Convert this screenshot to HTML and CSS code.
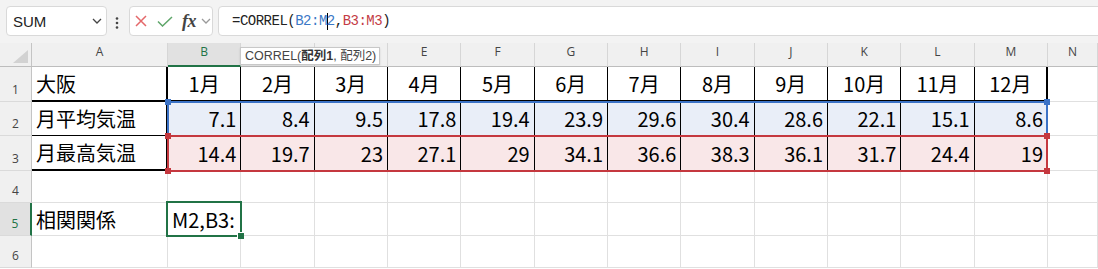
FILE: index.html
```html
<!DOCTYPE html>
<html>
	<head>
		<meta charset="UTF-8">
		<title>CORREL</title>
		<link rel="stylesheet" href="styles.css">
	</head>
	<body>
		<div class="bar">
			<div class="namebox">
				<span class="name">SUM</span>
				<svg class="chev" width="10" height="6" viewBox="0 0 10 6"><polyline points="1,1 5,5 9,1"/></svg>
			</div>
			<svg class="dots" width="4" height="12" viewBox="0 0 4 12"><circle cx="2" cy="1.5" r="1.3"/><circle cx="2" cy="6" r="1.3"/><circle cx="2" cy="10.5" r="1.3"/></svg>
			<div class="fxbox">
				<svg class="cancel" width="12" height="12" viewBox="0 0 12 12"><path d="M1 1L11 11M11 1L1 11"/></svg>
				<svg class="enter" width="16" height="11" viewBox="0 0 16 11"><polyline points="1,5.5 5.5,10 15,1"/></svg>
				<span class="fx">fx</span>
				<svg class="chev small" width="10" height="6" viewBox="0 0 10 6"><polyline points="1,1 5,5 9,1"/></svg>
			</div>
			<div class="formula">=CORREL(<span class="rb">B2:M</span><span class="caret"></span><span class="rb">2</span>,<span class="rr">B3:M3</span>)</div>
		</div>

		<div class="sheet">
			<!-- 列見出し（C,Dはヒントに隠れている） -->
			<div class="corner"><span class="tri"></span></div>
			<div class="ch">A</div><div class="ch sel">B</div><div class="ch"></div><div class="ch"></div><div class="ch">E</div><div class="ch">F</div><div class="ch">G</div><div class="ch">H</div><div class="ch">I</div><div class="ch">J</div><div class="ch">K</div><div class="ch">L</div><div class="ch">M</div><div class="ch">N</div>

			<!-- 1行目 -->
			<div class="rh">1</div>
			<div class="c t hb hr">大阪</div>
			<div class="c t hb mid">1月</div><div class="c t hb mid">2月</div><div class="c t hb mid">3月</div><div class="c t hb mid">4月</div><div class="c t hb mid">5月</div><div class="c t hb mid">6月</div><div class="c t hb mid">7月</div><div class="c t hb mid">8月</div><div class="c t hb mid">9月</div><div class="c t hb mid">10月</div><div class="c t hb mid">11月</div><div class="c t hb hr mid">12月</div>
			<div class="c"></div>

			<!-- 2行目 -->
			<div class="rh">2</div>
			<div class="c t hr">月平均気温</div>
			<div class="c t num bl">7.1</div><div class="c t num bl">8.4</div><div class="c t num bl">9.5</div><div class="c t num bl">17.8</div><div class="c t num bl">19.4</div><div class="c t num bl">23.9</div><div class="c t num bl">29.6</div><div class="c t num bl">30.4</div><div class="c t num bl">28.6</div><div class="c t num bl">22.1</div><div class="c t num bl">15.1</div><div class="c t num bl">8.6</div>
			<div class="c"></div>

			<!-- 3行目 -->
			<div class="rh">3</div>
			<div class="c t hb hr">月最高気温</div>
			<div class="c t num rd">14.4</div><div class="c t num rd">19.7</div><div class="c t num rd">23</div><div class="c t num rd">27.1</div><div class="c t num rd">29</div><div class="c t num rd">34.1</div><div class="c t num rd">36.6</div><div class="c t num rd">38.3</div><div class="c t num rd">36.1</div><div class="c t num rd">31.7</div><div class="c t num rd">24.4</div><div class="c t num rd">19</div>
			<div class="c"></div>

			<!-- 4行目 -->
			<div class="rh">4</div>
			<div class="c"></div><div class="c"></div><div class="c"></div><div class="c"></div><div class="c"></div><div class="c"></div><div class="c"></div><div class="c"></div><div class="c"></div><div class="c"></div><div class="c"></div><div class="c"></div><div class="c"></div><div class="c"></div>

			<!-- 5行目 -->
			<div class="rh sel">5</div>
			<div class="c">相関関係</div><div class="c">M2,B3:</div><div class="c"></div><div class="c"></div><div class="c"></div><div class="c"></div><div class="c"></div><div class="c"></div><div class="c"></div><div class="c"></div><div class="c"></div><div class="c"></div><div class="c"></div><div class="c"></div>

			<!-- 6行目 -->
			<div class="rh">6</div>
			<div class="c"></div><div class="c"></div><div class="c"></div><div class="c"></div><div class="c"></div><div class="c"></div><div class="c"></div><div class="c"></div><div class="c"></div><div class="c"></div><div class="c"></div><div class="c"></div><div class="c"></div><div class="c"></div>

			<!-- 参照範囲と選択セル -->
			<div class="range blue"><i class="h tl"></i><i class="h tr"></i></div>
			<div class="range red"><i class="h tl"></i><i class="h tr"></i><i class="h bl2"></i><i class="h br"></i></div>
			<div class="cur"><i class="fill"></i></div>

			<div class="tip">CORREL(<b>配列1</b>, 配列2)</div>
		</div>
	</body>
</html>
```

FILE: styles.css
```css
*{
	margin: 0;
	padding: 0;
	box-sizing: border-box;
}
body{
	width: 1098px;
	height: 269px;
	overflow: hidden;
	background: #fff;
	font-family: "Liberation Sans", "Noto Sans CJK JP", sans-serif;
}

/* 数式バー */
.bar{
	height: 43px;
	background: #f3f3f3;
	display: flex;
	align-items: flex-start;
	padding: 6px 0 0 6px;
	overflow: hidden;
}
.namebox,
.fxbox,
.formula{
	height: 30px;
	background: #fff;
	border: 1px solid #d9d9d9;
	border-radius: 4px;
	display: flex;
	align-items: center;
}
.namebox{
	width: 101px;
	padding: 0 4px 0 6px;
	justify-content: space-between;
}
.name{
	font-size: 15px;
	color: #222;
}
.chev polyline{
	fill: none;
	stroke: #444;
	stroke-width: 1.3;
}
.chev.small polyline{
	stroke: #9a9a9a;
}
.dots{
	margin: 11px 0 0 8px;
	fill: #444;
}
.fxbox{
	width: 84px;
	margin-left: 10px;
	padding-left: 5px;
}
.cancel path{
	stroke: #e4686a;
	stroke-width: 1.5;
}
.enter{
	margin-left: 10px;
}
.enter polyline{
	fill: none;
	stroke: #5fa66a;
	stroke-width: 1.5;
}
.fx{
	margin-left: 9px;
	font-family: "Liberation Serif", serif;
	font-style: italic;
	font-weight: bold;
	font-size: 18px;
	color: #444;
	letter-spacing: -0.5px;
}
.chev.small{
	margin-left: 5px;
}
.formula{
	flex: 1;
	margin-left: 5px;
	margin-right: -10px;
	padding-left: 13px;
	font-family: "Liberation Mono", monospace;
	font-size: 14px;
	letter-spacing: -0.5px;
	color: #222;
	white-space: pre;
}
.rb{
	color: #3b78c6;
}
.rr{
	color: #c43b45;
}
.caret{
	display: inline-block;
	width: 1px;
	height: 17px;
	margin-right: -1px;
	background: #000;
	vertical-align: middle;
}

/* シート */
.sheet{
	position: relative;
	display: grid;
	grid-template-columns: 32px 136px repeat(12, minmax(0, 1fr)) 50px;
	grid-template-rows: 24px 35px 34px 35px 32px 33px 32px;
}
.corner{
	background: #f0f0f0;
	border-right: 1px solid #c4c4c4;
	border-bottom: 1px solid #bdbdbd;
	display: flex;
	justify-content: flex-end;
	align-items: flex-end;
	padding: 0 3px 3px 0;
}
.tri{
	width: 15px;
	height: 13px;
	background: #d2d2d2;
	clip-path: polygon(100% 0, 100% 100%, 0 100%);
}
.ch{
	background: #f0f0f0;
	border-right: 1px solid #d6d6d6;
	border-bottom: 1px solid #bdbdbd;
	display: flex;
	justify-content: center;
	align-items: center;
	padding-bottom: 6px;
	font-family: "Open Sans", sans-serif;
	font-size: 12px;
	color: #444;
}
.ch.sel{
	background: #e1e1e1;
	color: #217346;
	border-bottom: 2px solid #217346;
}
.rh{
	background: #f0f0f0;
	border-right: 1px solid #c4c4c4;
	border-bottom: 1px solid #dadada;
	display: flex;
	justify-content: center;
	align-items: flex-end;
	padding-bottom: 3px;
	font-family: "Open Sans", sans-serif;
	font-size: 12px;
	color: #444;
}
.rh.sel{
	background: #e1e1e1;
	color: #217346;
	border-right: 2px solid #217346;
}
.c{
	border-right: 1px solid #e0e0e0;
	border-bottom: 1px solid #e0e0e0;
	display: flex;
	align-items: center;
	padding: 0 4px;
	font-family: "Noto Sans CJK JP", sans-serif;
	font-size: 20px;
	color: #000;
	white-space: nowrap;
}
.t{
	border-right-color: #000;
	border-bottom-color: #000;
}
.hb{
	border-bottom-width: 2px;
}
.hr{
	border-right-width: 2px;
}
.mid{
	justify-content: center;
}
.num{
	justify-content: flex-end;
}
.bl{
	background: #e9eef8;
}
.rd{
	background: #f9e7e8;
}

/* 参照範囲の枠 */
.range{
	position: absolute;
	grid-column: 3 / 15;
	top: -1px;
	left: -1px;
	right: 0;
	bottom: -1px;
	border: 2px solid;
	pointer-events: none;
}
.range.blue{
	grid-row: 3 / 4;
	border-color: #3b72c6;
	color: #3b72c6;
}
.range.red{
	grid-row: 4 / 5;
	border-color: #c5383f;
	color: #c5383f;
}
.h{
	position: absolute;
	width: 6px;
	height: 6px;
	background: currentColor;
}
.h.tl{ left: -4px; top: -4px; }
.h.tr{ right: -4px; top: -4px; }
.h.bl2{ left: -4px; bottom: -4px; }
.h.br{ right: -4px; bottom: -4px; }

.cur{
	position: absolute;
	grid-column: 3 / 4;
	grid-row: 6 / 7;
	top: -2px;
	left: -2px;
	right: -1px;
	bottom: -1px;
	border: 2px solid #217346;
}
.fill{
	position: absolute;
	right: -4px;
	bottom: -4px;
	width: 7px;
	height: 7px;
	background: #217346;
	border-left: 1px solid #fff;
	border-top: 1px solid #fff;
}

/* 関数のヒント */
.tip{
	position: absolute;
	left: 240px;
	top: 4px;
	width: 140px;
	height: 18px;
	background: #fff;
	border: 1px solid #c8c8c8;
	box-shadow: 0 1px 2px rgba(0,0,0,.12);
	padding-left: 4px;
	font-size: 12.5px;
	line-height: 16px;
	color: #444;
	white-space: nowrap;
}
.tip b{
	font-weight: bold;
	color: #333;
}
```
